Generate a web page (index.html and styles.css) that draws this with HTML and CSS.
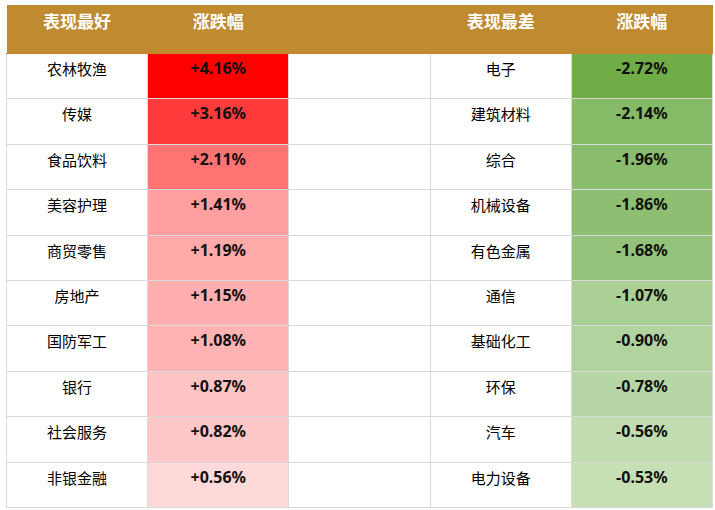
FILE: index.html
```html
<!DOCTYPE html>
<html lang="zh-CN">
<head>
<meta charset="utf-8">
<title>行业涨跌幅</title>
<link rel="stylesheet" href="styles.css">
</head>
<body>
<table class="board">
  <colgroup>
    <col class="c"><col class="c"><col class="c"><col class="c"><col class="c">
  </colgroup>
  <thead>
    <tr class="head">
      <th>表现最好</th><th>涨跌幅</th><th></th><th>表现最差</th><th>涨跌幅</th>
    </tr>
  </thead>
  <tbody>
    <tr><td>农林牧渔</td><td class="num" style="background:#FF0000">+4.16%</td><td></td><td>电子</td><td class="num" style="background:#70AD47">-2.72%</td></tr>
    <tr><td>传媒</td><td class="num" style="background:#FF3B3B">+3.16%</td><td></td><td>建筑材料</td><td class="num" style="background:#85BA66">-2.14%</td></tr>
    <tr><td>食品饮料</td><td class="num" style="background:#FF7373">+2.11%</td><td></td><td>综合</td><td class="num" style="background:#8ABC6D">-1.96%</td></tr>
    <tr><td>美容护理</td><td class="num" style="background:#FF9F9F">+1.41%</td><td></td><td>机械设备</td><td class="num" style="background:#8DBE72">-1.86%</td></tr>
    <tr><td>商贸零售</td><td class="num" style="background:#FFA9A9">+1.19%</td><td></td><td>有色金属</td><td class="num" style="background:#94C27B">-1.68%</td></tr>
    <tr><td>房地产</td><td class="num" style="background:#FFAFAF">+1.15%</td><td></td><td>通信</td><td class="num" style="background:#AAD096">-1.07%</td></tr>
    <tr><td>国防军工</td><td class="num" style="background:#FFB3B3">+1.08%</td><td></td><td>基础化工</td><td class="num" style="background:#B1D49F">-0.90%</td></tr>
    <tr><td>银行</td><td class="num" style="background:#FFC4C4">+0.87%</td><td></td><td>环保</td><td class="num" style="background:#B6D7A5">-0.78%</td></tr>
    <tr><td>社会服务</td><td class="num" style="background:#FFC7C7">+0.82%</td><td></td><td>汽车</td><td class="num" style="background:#C0DCB0">-0.56%</td></tr>
    <tr><td>非银金融</td><td class="num" style="background:#FFD9D9">+0.56%</td><td></td><td>电力设备</td><td class="num" style="background:#C6DFB5">-0.53%</td></tr>
  </tbody>
</table>
</body>
</html>
```
FILE: styles.css
```css
html, body {
  margin: 0;
  padding: 0;
  background: #ffffff;
}

body {
  padding: 5px 0 0 6px;
  font-family: "Noto Sans", "Noto Sans CJK SC", sans-serif;
}

.board {
  border-collapse: collapse;
  table-layout: fixed;
  width: 707px;
}

.board .c {
  width: 20%;
}

.head th {
  height: 48px;
  padding: 0;
  background: #BF8A30;
  color: #ffffff;
  font-family: "Noto Sans CJK SC", sans-serif;
  font-size: 17px;
  font-weight: 700;
  text-align: center;
  vertical-align: top;
  line-height: 32px;
  border-bottom: 1px solid #C48A24;
}

.board tbody tr {
  height: 45.4px;
}

.board td {
  padding: 4px 0 0 0;
  border: 1px solid #D9D9D9;
  text-align: center;
  vertical-align: top;
  font-family: "Noto Sans CJK SC", sans-serif;
  font-size: 15px;
  line-height: 21px;
  color: #000000;
}

.board tbody tr:first-child td {
  border-top: none;
}

.board td.num {
  font-family: "Noto Sans", "Noto Sans CJK SC", sans-serif;
  font-weight: 700;
  font-size: 16px;
  color: #111111;
}
```
